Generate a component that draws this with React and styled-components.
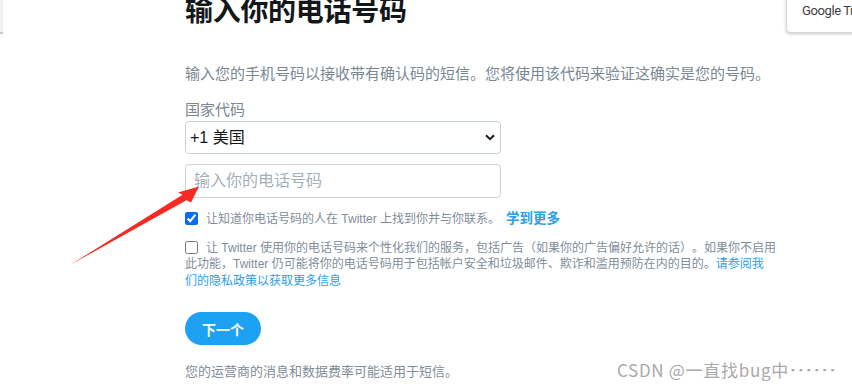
import React from "react";
import styled, { createGlobalStyle } from "styled-components";

const Global = createGlobalStyle`
  html, body { margin: 0; padding: 0; background: #ffffff; }
  body {
    font-family: "Liberation Sans", "Noto Sans CJK SC", sans-serif;
    overflow: hidden;
    text-spacing-trim: space-all;
  }
  * { box-sizing: border-box; }
`;

const Page = styled.div`
  position: relative;
  width: 852px;
  height: 389px;
  overflow: hidden;
  background: #fff;
`;

const Column = styled.main`
  display: flex;
  flex-direction: column;
  align-items: flex-start;
  width: 600px;
  margin-left: 185px;
`;

const Title = styled.h1`
  margin: -3px 0 0;
  font-size: 28px;
  line-height: 30px;
  font-weight: 700;
  color: #14171a;
  letter-spacing: -0.3px;
`;

const Description = styled.p`
  margin: 37px 0 0;
  font-size: 15px;
  line-height: 20px;
  color: #7a8793;
  white-space: nowrap;
`;

const FieldLabel = styled.label`
  margin-top: 16px;
  font-size: 15px;
  line-height: 20px;
  color: #7a8793;
`;

const SelectWrap = styled.div`
  position: relative;
  margin-top: 1px;
  width: 316px;
  height: 33px;
`;

const Select = styled.select`
  appearance: none;
  width: 100%;
  height: 100%;
  border: 1px solid #c9d3da;
  border-radius: 4px;
  background: #fff;
  padding: 0 0 0 4px;
  font-family: "Liberation Sans", "Noto Sans CJK SC", sans-serif;
  font-size: 16px;
  color: #14171a;
  outline: none;
`;

const Chevron = styled.svg`
  position: absolute;
  right: 6px;
  top: 13px;
  pointer-events: none;
`;

const PhoneInput = styled.input`
  margin-top: 10px;
  width: 316px;
  height: 34px;
  border: 1px solid #c9d3da;
  border-radius: 4px;
  padding: 0 8px;
  font-family: "Liberation Sans", "Noto Sans CJK SC", sans-serif;
  font-size: 16px;
  color: #14171a;
  outline: none;
  &::placeholder { color: #a3b0ba; }
`;

const CheckRow = styled.label`
  display: block;
  margin-top: ${(p) => p.$gap}px;
  width: ${(p) => p.$width}px;
  font-size: 12px;
  line-height: 16.5px;
  color: #7f8d99;
`;

const Box = styled.input`
  width: 13px;
  height: 13px;
  margin: 0 8px 0 0;
  vertical-align: -2px;
  accent-color: #0a6cf5;
`;

const Link = styled.a`
  color: #2aa0ea;
  text-decoration: none;
  font-weight: ${(p) => (p.$bold ? 700 : 400)};
  font-size: ${(p) => (p.$bold ? "13.5px" : "inherit")};
  margin-left: ${(p) => (p.$bold ? "6px" : "0")};
`;

const NextButton = styled.button`
  margin-top: 23px;
  width: 76px;
  height: 33px;
  border: none;
  border-radius: 17px;
  background: #1da1f2;
  color: #fff;
  font-family: "Liberation Sans", "Noto Sans CJK SC", sans-serif;
  font-size: 14px;
  font-weight: 700;
  padding: 0;
`;

const Footnote = styled.p`
  margin: 18px 0 0;
  font-size: 13px;
  line-height: 18px;
  color: #7f8d99;
`;

const TranslateBubble = styled.div`
  position: absolute;
  top: -6px;
  left: 786px;
  width: 120px;
  height: 39px;
  background: #fff;
  border: 1px solid #d5d7da;
  border-radius: 4px;
  box-shadow: 0 1px 3px rgba(60, 64, 67, 0.3);
  padding: 8px 0 0 15px;
  font-family: "Roboto", "Liberation Sans", sans-serif;
  font-size: 13px;
  letter-spacing: -0.4px;
  color: #3c4043;
  white-space: nowrap;
`;

const LeftEdge = styled.div`
  position: absolute;
  left: 0;
  top: 0;
  width: 3px;
  height: 34px;
  background: #f1f1f1;
  border-bottom: 2px solid #c8c8c8;
`;

const Arrow = styled.svg`
  position: absolute;
  left: 0;
  top: 0;
  pointer-events: none;
`;

const Watermark = styled.div`
  position: absolute;
  left: 617px;
  top: 359px;
  font-family: "Noto Sans CJK SC", sans-serif;
  font-size: 17px;
  line-height: 22px;
  letter-spacing: 0.7px;
  color: #a9a9a9;
  white-space: nowrap;
`;

const Dots = styled.span`
  display: inline-block;
  transform: scaleX(1.4);
  transform-origin: left center;
  letter-spacing: 0;
`;

export default function App() {
  return (
    <Page>
      <Global />
      <LeftEdge />
      <Column>
        <Title>输入你的电话号码</Title>
        <Description>
          输入您的手机号码以接收带有确认码的短信。您将使用该代码来验证这确实是您的号码。
        </Description>
        <FieldLabel>国家代码</FieldLabel>
        <SelectWrap>
          <Select defaultValue="us">
            <option value="us">+1 美国</option>
          </Select>
          <Chevron width="10" height="7" viewBox="0 0 10 7">
            <path d="M1 1.2 L5 5.2 L9 1.2" fill="none" stroke="#1a1a1a" strokeWidth="2" />
          </Chevron>
        </SelectWrap>
        <PhoneInput placeholder="输入你的电话号码" />
        <CheckRow $gap={13} $width={600}>
          <Box type="checkbox" defaultChecked />
          让知道你电话号码的人在 Twitter 上找到你并与你联系。
          <Link $bold href="#">学到更多</Link>
        </CheckRow>
        <CheckRow $gap={12} $width={596}>
          <Box type="checkbox" />
          让 Twitter 使用你的电话号码来个性化我们的服务，包括广告（如果你的广告偏好允许的话）。如果你不启用此功能，Twitter 仍可能将你的电话号码用于包括帐户安全和垃圾邮件、欺诈和滥用预防在内的目的。
          <Link href="#">
            请参阅我
            <br />
            们的隐私政策以获取更多信息
          </Link>
        </CheckRow>
        <NextButton>下一个</NextButton>
        <Footnote>您的运营商的消息和数据费率可能适用于短信。</Footnote>
      </Column>
      <TranslateBubble>Google Translate</TranslateBubble>
      <Arrow width="852" height="389" viewBox="0 0 852 389">
        <polygon
          points="70,265 182.6,194.8 178,192.5 199,186.5 191,202.5 186.4,200.2"
          fill="#f52a22"
        />
      </Arrow>
      <Watermark>
        CSDN @一直找bug中<Dots>……</Dots>
      </Watermark>
    </Page>
  );
}
